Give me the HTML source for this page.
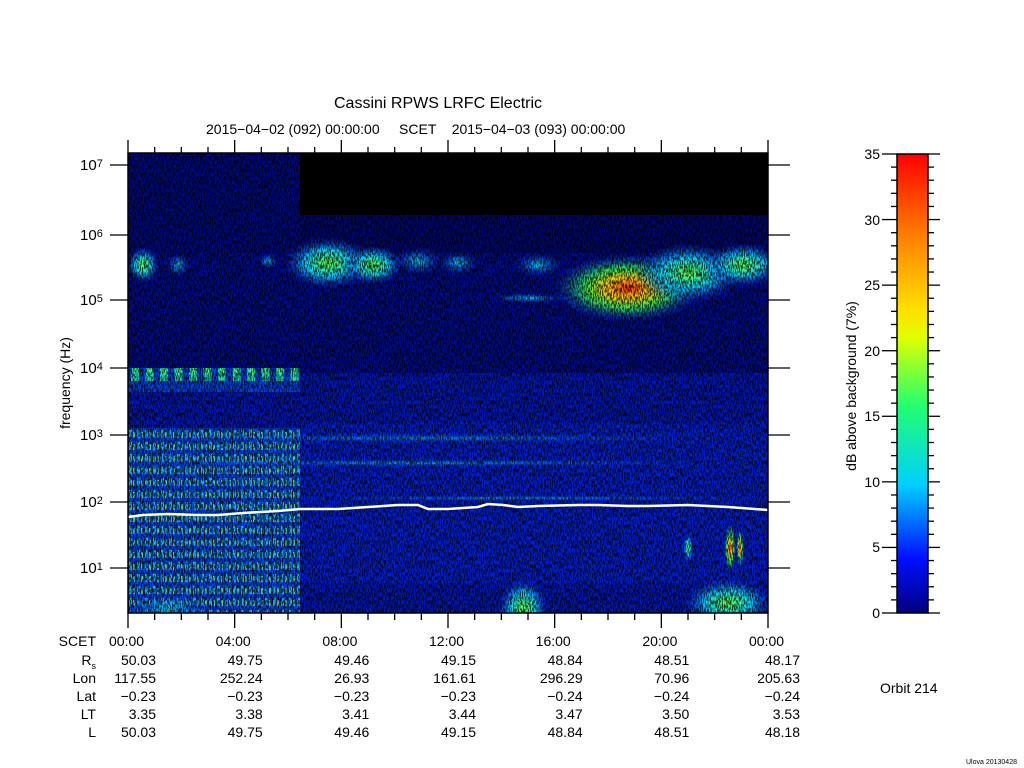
<!DOCTYPE html>
<html><head><meta charset="utf-8"><style>
body{margin:0;background:#fff;width:1024px;height:768px;position:relative;overflow:hidden;font-family:"Liberation Sans",sans-serif;color:#000}
.t{position:absolute;white-space:nowrap;font-size:14px;line-height:14px}
.r{text-align:right}
</style></head><body>
<div class="t" style="left:334px;top:97px;font-size:16px">Cassini RPWS LRFC Electric</div>
<div class="t" style="left:206px;top:122px">2015−04−02 (092) 00:00:00 &nbsp;&nbsp;&nbsp;&nbsp;SCET &nbsp;&nbsp;&nbsp;2015−04−03 (093) 00:00:00</div>

<svg style="position:absolute;left:0;top:0" width="1024" height="768">
<defs>
<clipPath id="cp"><rect width="640" height="460"/></clipPath>
<filter id="nz" x="0" y="0" width="100%" height="100%">
<feTurbulence type="fractalNoise" baseFrequency="0.9 0.25" numOctaves="2" seed="3"/>
<feColorMatrix type="matrix" values="0 0 0 0 0  0 0 0 0 0  0 0 0 0 0  0 0 0 -9 5.0"/>
</filter>
<radialGradient id="g1"><stop offset="0" stop-color="#ff3000"/><stop offset=".3" stop-color="#ffd000"/><stop offset=".6" stop-color="#20e060"/><stop offset="1" stop-color="#0040ff" stop-opacity="0"/></radialGradient>
<radialGradient id="g2"><stop offset="0" stop-color="#60ff40"/><stop offset=".5" stop-color="#00d0ff"/><stop offset="1" stop-color="#0030ff" stop-opacity="0"/></radialGradient>
<radialGradient id="g3"><stop offset="0" stop-color="#00e0ff"/><stop offset="1" stop-color="#0030ff" stop-opacity="0"/></radialGradient>
<linearGradient id="cb" x1="0" y1="1" x2="0" y2="0">
<stop offset="0" stop-color="#000080"/><stop offset=".12" stop-color="#0010ff"/><stop offset=".28" stop-color="#00d0ff"/><stop offset=".45" stop-color="#20ff70"/><stop offset=".6" stop-color="#e0ff00"/><stop offset=".66" stop-color="#ffe000"/><stop offset=".82" stop-color="#ff8000"/><stop offset="1" stop-color="#ff0000"/></linearGradient>
<pattern id="comb" width="14.5" height="30" patternUnits="userSpaceOnUse"><rect width="14.5" height="30" fill="#0040e0"/><rect x="3" y="0" width="8" height="18" fill="#10e0b0"/><rect x="5" y="3" width="4" height="8" fill="#40ff80"/></pattern>
<pattern id="low" width="8" height="12" patternUnits="userSpaceOnUse"><rect width="8" height="12" fill="#0050f0"/><rect x="1" y="1" width="3" height="8" fill="#20e0c0"/><rect x="5" y="3" width="2" height="6" fill="#60ff60"/></pattern>
</defs>
<g transform="translate(128,153)"><g clip-path="url(#cp)">
<rect width="640" height="460" fill="#0018b8"/>
<rect width="172" height="100" fill="#000a80"/>
<rect x="172" width="468" height="62" fill="#000"/>
<rect x="172" y="62" width="468" height="38" fill="#000870"/>
<rect x="0" y="100" width="640" height="120" fill="#000c8c"/>
<rect x="0" y="275" width="172" height="185" fill="url(#low)" opacity=".8"/>
<rect x="0" y="215" width="172" height="24" fill="url(#comb)"/>
<rect x="172" y="270" width="468" height="160" fill="#0020d0"/>
<ellipse cx="15" cy="112" rx="16" ry="18" fill="url(#g2)"/>
<ellipse cx="50" cy="112" rx="12" ry="12" fill="url(#g3)"/>
<ellipse cx="140" cy="108" rx="10" ry="8" fill="url(#g3)"/>
<ellipse cx="200" cy="110" rx="45" ry="26" fill="url(#g2)"/>
<ellipse cx="245" cy="112" rx="30" ry="20" fill="url(#g2)"/>
<ellipse cx="290" cy="108" rx="25" ry="14" fill="url(#g3)"/>
<ellipse cx="330" cy="110" rx="20" ry="12" fill="url(#g3)"/>
<ellipse cx="410" cy="112" rx="25" ry="12" fill="url(#g3)"/>
<ellipse cx="500" cy="135" rx="75" ry="34" fill="url(#g1)"/>
<ellipse cx="560" cy="120" rx="55" ry="30" fill="url(#g2)"/>
<ellipse cx="615" cy="112" rx="40" ry="22" fill="url(#g2)"/>
<ellipse cx="400" cy="145" rx="40" ry="5" fill="url(#g3)"/>
<ellipse cx="300" cy="285" rx="340" ry="5" fill="url(#g3)" opacity=".6"/>
<ellipse cx="290" cy="310" rx="350" ry="4" fill="url(#g3)" opacity=".7"/>
<ellipse cx="400" cy="345" rx="250" ry="3" fill="url(#g3)" opacity=".7"/>
<ellipse cx="395" cy="455" rx="25" ry="30" fill="url(#g2)"/>
<ellipse cx="600" cy="450" rx="45" ry="25" fill="url(#g2)"/>
<ellipse cx="40" cy="455" rx="45" ry="14" fill="url(#g3)"/>
<ellipse cx="602" cy="395" rx="6" ry="25" fill="url(#g1)"/>
<ellipse cx="612" cy="395" rx="4" ry="20" fill="url(#g1)"/>
<ellipse cx="560" cy="395" rx="5" ry="15" fill="url(#g2)"/>
<rect width="640" height="460" filter="url(#nz)" opacity=".7"/>
<polyline fill="none" stroke="#fff" stroke-width="2.5" points="0,364 15,362 40,361 70,362 90,362 115,360 150,358 172,356 210,356 240,354 270,352 290,352 300,356 320,356 350,354 360,351 375,352 390,354 410,353 450,352 470,352 500,353 520,353 560,352 600,354 640,357"/>
</g></g>
<g stroke="#000" stroke-width="1.5" fill="none">
<rect x="128" y="153" width="640" height="460"/>
<rect x="897" y="154" width="31" height="459" fill="url(#cb)"/>
</g>
<g stroke="#000" stroke-width="1.3" id="ax"></g>
</svg>

<div class="t" style="top:383px;transform:translate(-50%,-50%) rotate(-90deg);left:65px">frequency (Hz)</div>
<div class="t" style="left:851px;top:386px;transform:translate(-50%,-50%) rotate(-90deg)">dB above background (7%)</div>
<div class="t" style="left:880px;top:681px">Orbit 214</div>
<div class="t" style="left:966px;top:759px;font-size:7px;line-height:7px">Ulova 20130428</div>
<div id="lab"></div>
<script>
var s='',ax='';
var ex=['7','6','5','4','3','2','1'],ey=[165,235,300,368,435,502,568];
for(var i=0;i<7;i++){s+='<div class="t" style="left:80px;top:'+(ey[i]-6)+'px;font-size:15px">10<sup style="font-size:11px;position:relative;top:-2px;vertical-align:top">'+ex[i]+'</sup></div>';
ax+='<line x1="110" y1="'+ey[i]+'" x2="128" y2="'+ey[i]+'"/><line x1="768" y1="'+ey[i]+'" x2="790" y2="'+ey[i]+'"/>';}
var tm=['00:00','04:00','08:00','12:00','16:00','20:00','00:00'];
var rows=[['50.03','49.75','49.46','49.15','48.84','48.51','48.17'],['117.55','252.24','26.93','161.61','296.29','70.96','205.63'],['−0.23','−0.23','−0.23','−0.23','−0.24','−0.24','−0.24'],['3.35','3.38','3.41','3.44','3.47','3.50','3.53'],['50.03','49.75','49.46','49.15','48.84','48.51','48.18']];
var ry=[660,678,696,714,732],nm=['R<sub style="font-size:9px">s</sub>','Lon','Lat','LT','L'];
s+='<div class="t r" style="left:40px;width:56px;top:634px">SCET</div>';
for(var r=0;r<5;r++)s+='<div class="t r" style="left:40px;width:56px;top:'+(ry[r]-7)+'px">'+nm[r]+'</div>';
for(var j=0;j<=24;j++){var x=128+j*640/24;var big=j%4==0;
ax+='<line x1="'+x+'" y1="'+(big?140:147)+'" x2="'+x+'" y2="153"/><line x1="'+x+'" y1="613" x2="'+x+'" y2="'+(big?628:620)+'"/>';}
for(var c=0;c<7;c++){var x=128+c*640/6;s+='<div class="t" style="left:'+(x-19)+'px;top:634px">'+tm[c]+'</div>';
for(var r=0;r<5;r++)s+='<div class="t r" style="left:'+(x-72)+'px;width:'+(c==6?104:100)+'px;top:'+(ry[r]-7)+'px">'+rows[r][c]+'</div>';}
for(var v=0;v<=35;v++){var y=613-v*459/35;var big=v%5==0;
ax+='<line x1="'+(big?882:891)+'" y1="'+y+'" x2="897" y2="'+y+'"/><line x1="928" y1="'+y+'" x2="'+(big?940:934)+'" y2="'+y+'"/>';
if(big)s+='<div class="t r" style="left:840px;width:40px;top:'+(y-7)+'px">'+v+'</div>';}
document.getElementById('lab').innerHTML=s;document.getElementById('ax').innerHTML=ax;
</script>
</body></html>
